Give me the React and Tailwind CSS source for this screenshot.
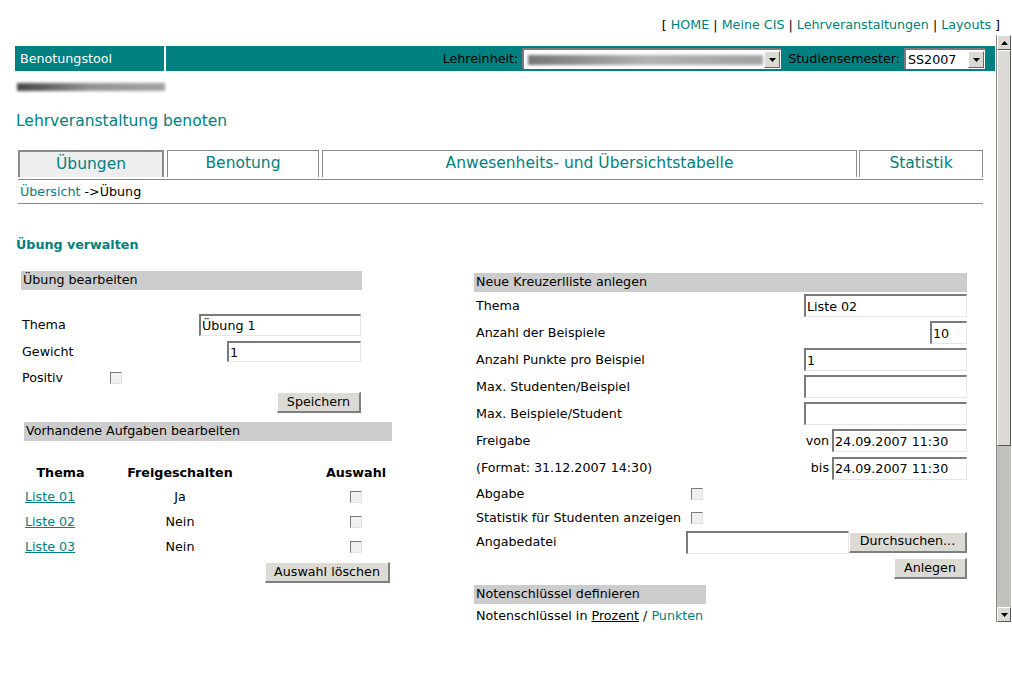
import React from 'react';

const TEAL = 'text-[#008080]';

const Field = ({ w, h = 'h-[22px]', value = '' }) => (
  <input
    readOnly
    value={value}
    className={`${w} ${h} bg-white border-t-2 border-l-2 border-r border-b border-t-[#7a7a7a] border-l-[#7a7a7a] border-r-[#e6e6e6] border-b-[#e6e6e6] pl-[1px] text-[12.7px] text-black outline-none`}
  />
);

const Check = () => (
  <div className="w-[12px] h-[12px] bg-[#f0f0f0] border border-t-[#7a7a7a] border-l-[#7a7a7a] border-r-[#e2e2e2] border-b-[#e2e2e2]" />
);

const Btn = ({ w, children }) => (
  <button className={`${w} h-[21px] bg-[#dcdad5] border-t border-l border-t-white border-l-white border-r-2 border-b-2 border-r-[#7f7f7f] border-b-[#7f7f7f] text-[12.7px] leading-none text-black`}>
    {children}
  </button>
);

const Bar = ({ w, children }) => (
  <div className={`${w} h-[19px] bg-[#cccccc] flex items-center pl-[2px] leading-none`}>{children}</div>
);

const DropBtn = () => (
  <div className="w-[16px] h-[17px] bg-[#dcdad5] border-t border-l border-t-white border-l-white border-r border-b border-r-[#666] border-b-[#666] flex items-center justify-center">
    <svg width="7" height="4" viewBox="0 0 7 4">
      <path d="M0 0 H7 L3.5 4 Z" fill="#000" />
    </svg>
  </div>
);

const Row = ({ label, children, h = 'h-[27px]' }) => (
  <div className={`flex ${h} items-center justify-between`}>
    <span>{label}</span>
    <div className="flex items-center">{children}</div>
  </div>
);

export default function App() {
  return (
    <div className="w-[1012px] h-[680px] bg-white overflow-hidden font-['DejaVu_Sans',sans-serif] text-[12.7px] text-black">
      {/* top links */}
      <div className="h-[35px] flex justify-end pt-[17px] pr-[12px] leading-[15px] whitespace-pre">
        [ <a className={TEAL}>HOME</a> | <a className={TEAL}>Meine CIS</a> | <a className={TEAL}>Lehrveranstaltungen</a> | <a className={TEAL}>Layouts</a> ]
      </div>

      <div className="flex h-[587px]">
        {/* frame content */}
        <div className="w-[996px] overflow-hidden pt-[11px] pl-[15px]">
          {/* header bar */}
          <div className="w-[980px] h-[25px] bg-[#008080] flex items-center">
            <div className="w-[149px] pl-[5px] text-white">Benotungstool</div>
            <div className="w-[2px] h-[25px] bg-white" />
            <div className="flex-1 flex items-center justify-end pr-[10px]">
              <span>Lehreinheit:</span>
              <div className="ml-[4px] w-[259px] h-[21px] bg-white border-t-2 border-l-2 border-t-[#7a7a7a] border-l-[#7a7a7a] flex items-center justify-between pr-[1px]">
                <div className="ml-[4px] w-[235px] h-[10px] bg-gradient-to-r from-[#666] via-[#aaa] to-[#999] blur-[1.5px] opacity-90" />
                <DropBtn />
              </div>
              <span className="ml-[7px]">Studiensemester:</span>
              <div className="ml-[4px] w-[81px] h-[21px] bg-white border-t-2 border-l-2 border-t-[#7a7a7a] border-l-[#7a7a7a] flex items-center justify-between pr-[1px]">
                <span className="pl-[2px]">SS2007</span>
                <DropBtn />
              </div>
            </div>
          </div>

          {/* blurred user name */}
          <div className="mt-[9px] h-[13px] flex items-center">
            <div className="ml-[2px] w-[148px] h-[8px] bg-gradient-to-r from-[#333] via-[#888] to-[#999] blur-[1.5px] opacity-90" />
          </div>

          {/* title */}
          <div className={`h-[57px] flex items-center pl-[1px] text-[15.5px] ${TEAL}`}>Lehrveranstaltung benoten</div>

          {/* tabs */}
          <div className={`ml-[3px] flex h-[27px] text-[15.5px] ${TEAL}`}>
            <div className="w-[146px] bg-[#eeeeee] border-2 border-b-0 border-[#8a8a8a] flex items-center justify-center">Übungen</div>
            <div className="ml-[3px] w-[152px] border border-b-0 border-[#8a8a8a] flex items-center justify-center">Benotung</div>
            <div className="ml-[3px] w-[535px] border border-b-0 border-[#8a8a8a] flex items-center justify-center">Anwesenheits- und Übersichtstabelle</div>
            <div className="ml-[2px] w-[124px] border border-b-0 border-[#8a8a8a] flex items-center justify-center">Statistik</div>
          </div>
          <div className="ml-[3px] mt-[2px] w-[965px] h-px bg-[#8a8a8a]" />
          <div className="ml-[5px] h-[23px] flex items-center">
            <span className={TEAL}>Übersicht</span>
            <span>&nbsp;-&gt;Übung</span>
          </div>
          <div className="ml-[3px] w-[965px] h-px bg-[#8a8a8a]" />

          <div className={`h-[67px] pt-[33px] pl-[1px] font-bold leading-[16px] ${TEAL}`}>Übung verwalten</div>

          {/* two columns */}
          <div className="flex items-start">
            {/* left column */}
            <div className="ml-[6px] w-[371px]">
              <Bar w="w-[341px]">Übung bearbeiten</Bar>
              <div className="w-[341px] mt-[22px]">
                <div className="flex h-[26px] items-center justify-between pl-[1px]">
                  <span>Thema</span>
                  <Field w="w-[162px] mr-[1px]" value="Übung 1" />
                </div>
                <div className="flex h-[27px] items-center justify-between pl-[1px]">
                  <span>Gewicht</span>
                  <Field w="w-[134px] mr-[1px]" h="h-[21px]" value="1" />
                </div>
                <div className="flex h-[26px] items-center pl-[1px]">
                  <span className="w-[88px]">Positiv</span>
                  <Check />
                </div>
                <div className="flex justify-end mt-[1px] mr-[1px]">
                  <Btn w="w-[84px]">Speichern</Btn>
                </div>
              </div>

              <div className="ml-[3px] mt-[9px] w-[368px]">
                <Bar w="w-[368px]">Vorhandene Aufgaben bearbeiten</Bar>
                <div className="mt-[20px]">
                  <div className="flex h-[23px] items-center font-bold">
                    <div className="w-[73px] text-center">Thema</div>
                    <div className="w-[166px] text-center">Freigeschalten</div>
                    <div className="w-[57px]" />
                    <div className="w-[72px] text-center">Auswahl</div>
                  </div>
                  {[
                    ['Liste 01', 'Ja'],
                    ['Liste 02', 'Nein'],
                    ['Liste 03', 'Nein'],
                  ].map(([name, frei]) => (
                    <div key={name} className="flex h-[25px] items-center">
                      <div className="w-[73px] pl-[1px]">
                        <a className={`${TEAL} underline`}>{name}</a>
                      </div>
                      <div className="w-[166px] text-center">{frei}</div>
                      <div className="w-[57px]" />
                      <div className="w-[72px] flex justify-center">
                        <Check />
                      </div>
                    </div>
                  ))}
                  <div className="flex justify-end mt-[3px] mr-[2px]">
                    <Btn w="w-[125px]">Auswahl löschen</Btn>
                  </div>
                </div>
              </div>
            </div>

            {/* right column */}
            <div className="ml-[82px] mt-[2px] w-[493px]">
              <Bar w="w-[493px]">Neue Kreuzerlliste anlegen</Bar>
              <div className="pl-[2px]">
                <Row label="Thema"><Field w="w-[163px]" h="h-[23px]" value="Liste 02" /></Row>
                <Row label="Anzahl der Beispiele"><Field w="w-[37px]" h="h-[23px]" value="10" /></Row>
                <Row label="Anzahl Punkte pro Beispiel"><Field w="w-[163px]" h="h-[23px]" value="1" /></Row>
                <Row label="Max. Studenten/Beispiel"><Field w="w-[163px]" h="h-[23px]" /></Row>
                <Row label="Max. Beispiele/Student"><Field w="w-[163px]" h="h-[23px]" /></Row>
                <Row label="Freigabe">
                  <span className="mr-[3px]">von</span>
                  <Field w="w-[135px]" h="h-[23px]" value="24.09.2007 11:30" />
                </Row>
                <Row label="(Format: 31.12.2007 14:30)" h="h-[28px]">
                  <span className="mr-[3px]">bis</span>
                  <Field w="w-[135px]" h="h-[23px]" value="24.09.2007 11:30" />
                </Row>
                <div className="flex h-[24px] items-center">
                  <span className="w-[215px]">Abgabe</span>
                  <Check />
                </div>
                <div className="flex h-[24px] items-center">
                  <span className="w-[215px]">Statistik für Studenten anzeigen</span>
                  <Check />
                </div>
                <div className="flex h-[24px] items-center">
                  <span className="w-[210px]">Angabedatei</span>
                  <Field w="w-[163px]" h="h-[23px]" />
                  <Btn w="w-[118px]">Durchsuchen...</Btn>
                </div>
                <div className="flex justify-end mt-[4px]">
                  <Btn w="w-[73px]">Anlegen</Btn>
                </div>
              </div>
              <div className="mt-[6px]">
                <Bar w="w-[232px]">Notenschlüssel definieren</Bar>
              </div>
              <div className="h-[24px] flex items-center pl-[2px] whitespace-pre">
                Notenschlüssel in <span className="underline">Prozent</span> / <a className={TEAL}>Punkten</a>
              </div>
            </div>
          </div>
        </div>

        {/* scrollbar */}
        <div className="w-[15px] h-[587px] flex flex-col bg-[#c3c1bb] border-l border-[#8a8a8a]">
          <div className="h-[15px] bg-[#dcdad5] border-t border-l border-t-white border-l-white border-r border-b border-r-[#555] border-b-[#555] flex items-center justify-center">
            <svg width="7" height="4" viewBox="0 0 7 4"><path d="M0 4 H7 L3.5 0 Z" fill="#000" /></svg>
          </div>
          <div className="h-[396px] bg-[#dcdad5] border-t border-l border-t-white border-l-white border-r border-b border-r-[#555] border-b-[#555]" />
          <div className="flex-1" />
          <div className="h-[15px] bg-[#dcdad5] border-t border-l border-t-white border-l-white border-r border-b border-r-[#555] border-b-[#555] flex items-center justify-center">
            <svg width="7" height="4" viewBox="0 0 7 4"><path d="M0 0 H7 L3.5 4 Z" fill="#000" /></svg>
          </div>
        </div>
      </div>
    </div>
  );
}
